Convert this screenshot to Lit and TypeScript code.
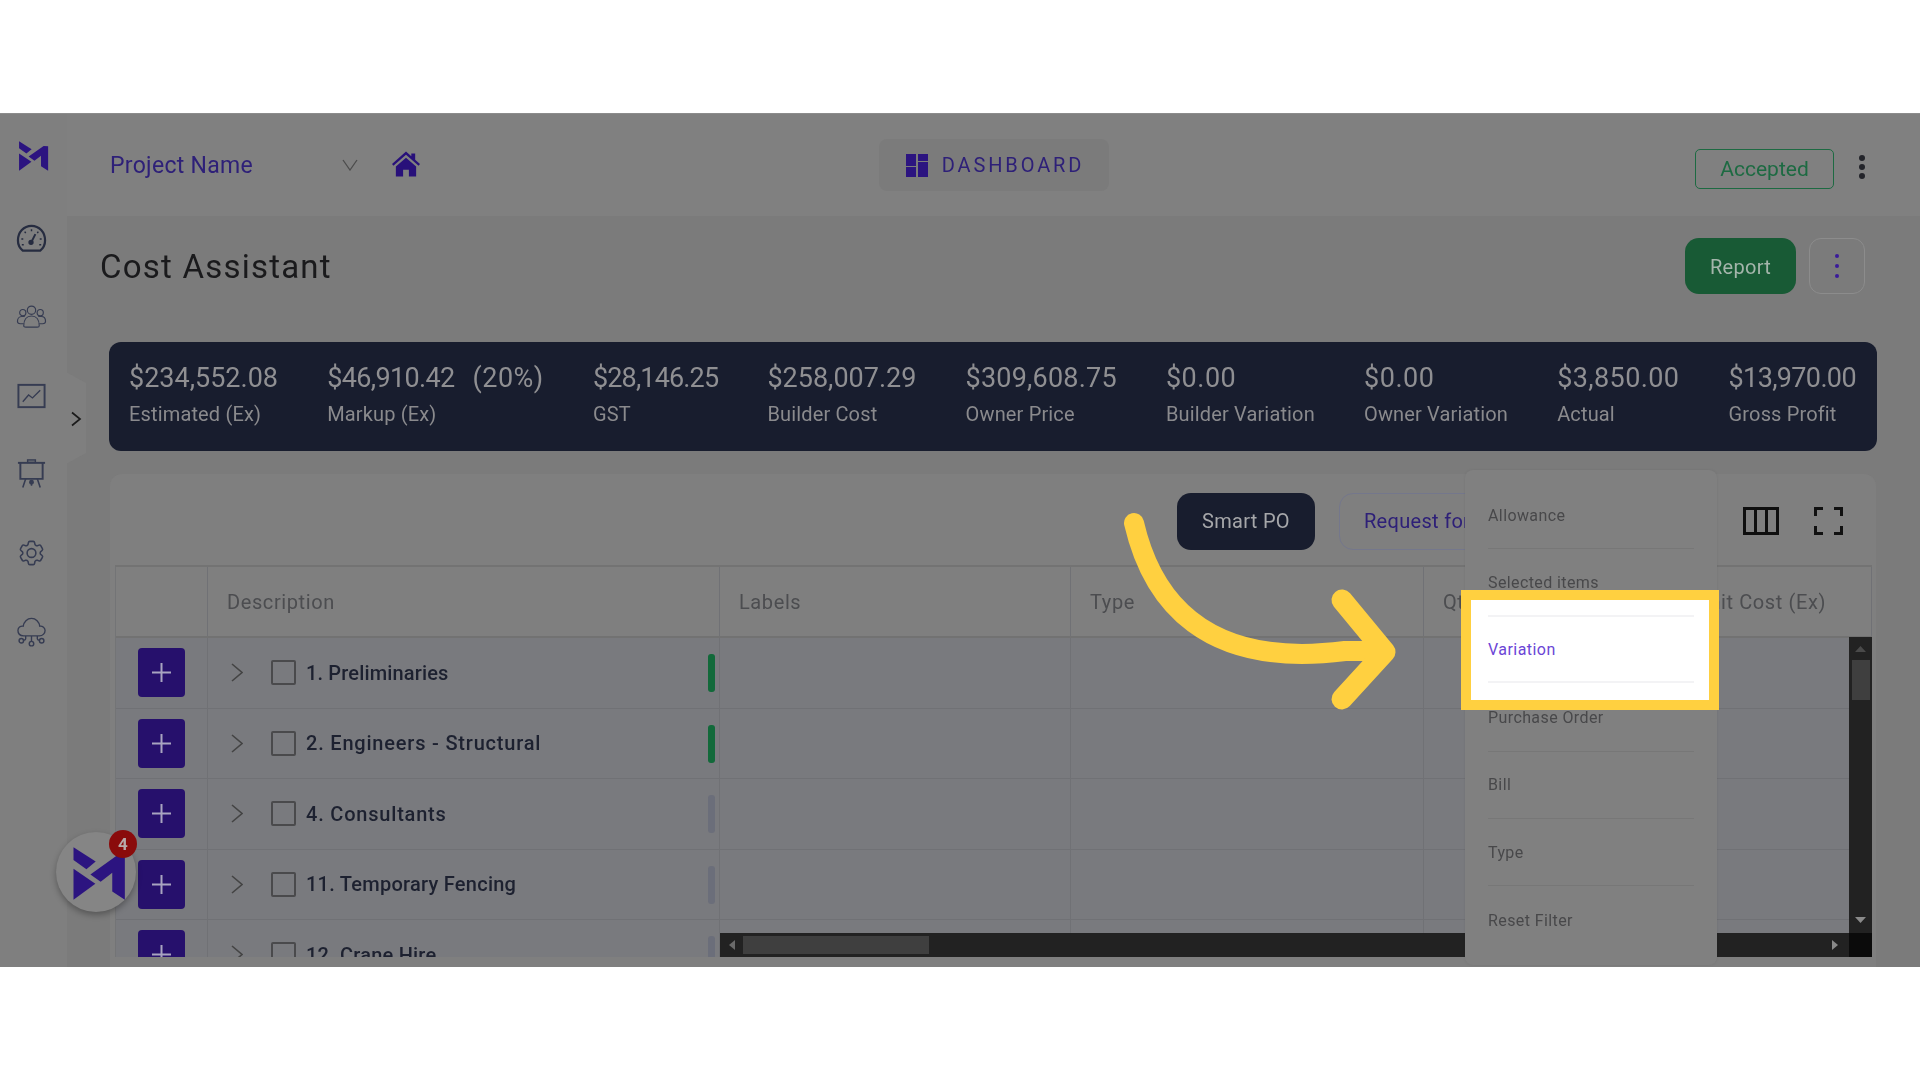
import { LitElement, html, css, svg } from "lit";
import { customElement } from "lit/decorators.js";

const logo = (w: number, h: number) => html`<svg width=${w} height=${h} viewBox="100 102 156 160"><g fill="currentColor"><path d="M101 103L168 146L140 169L101 141Z"/><path d="M101 168L167 213L101 261Z"/><path d="M152 185L232 128L256 130V261L218 236V180L183 207Z"/></g></svg>`;

const gear = "M9.594 3.94c.09-.542.56-.94 1.11-.94h2.593c.55 0 1.02.398 1.11.94l.213 1.281c.063.374.313.686.645.87.074.04.147.083.22.127.325.196.72.257 1.075.124l1.217-.456a1.125 1.125 0 0 1 1.37.49l1.296 2.247a1.125 1.125 0 0 1-.26 1.431l-1.003.827c-.293.241-.438.613-.43.992a7.723 7.723 0 0 1 0 .255c-.008.378.137.75.43.991l1.004.827c.424.35.534.955.26 1.43l-1.298 2.247a1.125 1.125 0 0 1-1.369.491l-1.217-.456c-.355-.133-.75-.072-1.076.124a6.47 6.47 0 0 1-.22.128c-.331.183-.581.495-.644.869l-.213 1.281c-.09.543-.56.94-1.11.94h-2.594c-.55 0-1.019-.398-1.11-.94l-.213-1.281c-.062-.374-.312-.686-.644-.87a6.52 6.52 0 0 1-.22-.127c-.325-.196-.72-.257-1.076-.124l-1.217.456a1.125 1.125 0 0 1-1.369-.49l-1.297-2.247a1.125 1.125 0 0 1 .26-1.431l1.004-.827c.292-.24.437-.613.43-.991a6.932 6.932 0 0 1 0-.255c.007-.38-.138-.751-.43-.992l-1.004-.827a1.125 1.125 0 0 1-.26-1.43l1.297-2.247a1.125 1.125 0 0 1 1.37-.491l1.216.456c.356.133.751.072 1.076-.124.072-.044.146-.086.22-.128.332-.183.582-.495.644-.869l.214-1.28Z";

const navIcons = [
  svg`<path d="M7 29h18c3-2.500 5-6 5-10.500C30 10 24 3.500 16 3.500S2 10 2 18.500C2 23 4 26.500 7 29Z" stroke-width="2.300"/><path d="M16 20l4-8" stroke-width="2"/><circle cx="15.500" cy="20.500" r="2" fill="currentColor"/><path d="M16 7v2M9 9.500l1 1.500M23 9.500l-1 1.500M5.500 17h2M26.500 17h-2M6 23h2M26 23h-2" stroke-width="1.500"/>`,
  svg`<g stroke-width="1.200"><circle cx="16" cy="9" r="4.300"/><circle cx="7" cy="11.500" r="3.200"/><circle cx="25" cy="11.500" r="3.200"/><path d="M8 25c0-6 3-10 8-10s8 4 8 10c0 1-1 1.500-2 1.500H10C9 26.500 8 26 8 25Z"/><path d="M9 15.500H6C3 15.500 1.500 18 1.500 20.500c0 1.500 1 2.500 3 2.500H8M23 15.500h3c3 0 4.500 2.500 4.500 5 0 1.500-1 2.500-3 2.500H24"/></g>`,
  svg`<rect x="2.500" y="4.500" width="27" height="23" stroke-width="2"/><path d="M7 22l6-7 4 3 8-8" stroke-width="1.400"/>`,
  svg`<rect x="12" y="1.500" width="8" height="2.500"/><path d="M2 4.500h28" stroke-width="2"/><path d="M4.500 4.500V21h23V4.500" stroke-width="2"/><path d="M10 21l-3 9M22 21l3 9M16 25v3" stroke-width="1.600"/><circle cx="16" cy="24.500" r="1.800" fill="currentColor"/>`,
  svg`<g transform="scale(1.333)"><path d="${gear}" stroke-width="1.200"/><circle cx="12" cy="12" r="3.400" stroke-width="1.200"/></g>`,
  svg`<path d="M8 20C4 20 2 17.500 2 14.500S4.500 9.500 7.500 10C8 5.500 11.500 2 16 2c4.500 0 8 3.500 8.500 8 3-.500 5.500 2 5.500 4.500S28 20 24 20Z" stroke-width="1.400"/><path d="M16 20v6M10 20v3c0 1-1 1.500-2 1.500M22 20v3c0 1 1 1.500 2 1.500" stroke-width="1.400"/><circle cx="16" cy="28" r="2.300"/><circle cx="5.500" cy="25" r="2.300"/><circle cx="26.500" cy="25" r="2.300"/>`,
];

const stats: { v: string; l: string; x?: string; ls: number }[] = [
  { v: "$234,552.08", l: "Estimated (Ex)", ls: 0 },
  { v: "$46,910.42", l: "Markup (Ex)", x: "(20%)", ls: -0.65 },
  { v: "$28,146.25", l: "GST", ls: -0.85 },
  { v: "$258,007.29", l: "Builder Cost", ls: 0 },
  { v: "$309,608.75", l: "Owner Price", ls: 0.2 },
  { v: "$0.00", l: "Builder Variation", ls: 0.5 },
  { v: "$0.00", l: "Owner Variation", ls: 0.5 },
  { v: "$3,850.00", l: "Actual", ls: 0.4 },
  { v: "$13,970.00", l: "Gross Profit", ls: -0.65 },
];

const rows: { n: string; s: string; ls: number }[] = [
  { n: "1. Preliminaries", s: "ok", ls: 0.15 },
  { n: "2. Engineers - Structural", s: "ok", ls: 0.8 },
  { n: "4. Consultants", s: "idle", ls: 0.8 },
  { n: "11. Temporary Fencing", s: "idle", ls: 0.25 },
  { n: "12. Crane Hire", s: "idle", ls: 0.2 },
];

const menu = ["Allowance", "Selected items", "Variation", "Purchase Order", "Bill", "Type", "Reset Filter"];

@customElement("app-root")
export class AppRoot extends LitElement {
  static styles = css`
    :host { display: block; width: 1920px; height: 1080px; background: #fff; overflow: hidden; font-family: "Roboto", "Liberation Sans", sans-serif; }
    * { box-sizing: border-box; }
    .stage { position: relative; margin-top: 113px; height: 854px; }
    .dim { display: flex; height: 854px; background: #7f7f7f; border-top: 1px solid #8c8c8c; filter: blur(0.45px); position: relative; overflow: hidden; }

    .side { position: relative; width: 67px; flex: none; display: flex; flex-direction: column; align-items: center; padding: 27px 5px 0 0; color: #262c40; }
    .brand { color: #2c1480; height: 30px; margin: 0 0 51px 4px; }
    .nav { display: flex; flex-direction: column; gap: 46.800px; }
    .nav svg { display: block; fill: none; stroke: currentColor; stroke-width: 1.500; }
    .nav svg.soft { color: #363c52; }
    .tab { position: absolute; left: 66px; top: 258px; width: 20px; height: 92px; background: #7f7f7f; clip-path: polygon(0 0, 100% 12%, 100% 88%, 0 100%); display: flex; align-items: center; justify-content: center; color: #1b1b1b; z-index: 2; padding-top: 1px; }

    .main { flex: 1; min-width: 0; display: flex; flex-direction: column; background: #7b7b7b; }
    .head { height: 102px; flex: none; background: #808080; display: grid; grid-template-columns: 1fr auto 1fr; align-items: center; }
    .left { display: flex; align-items: center; padding-left: 43px; }
    .pname { width: 232px; font-size: 23px; color: #2e2078; letter-spacing: 0.300px; }
    .home { margin-left: 34px; margin-top: -2px; color: #28107a; display: block; }
    .pill { width: 230px; height: 52px; border-radius: 8px; background: #7b7b7b; display: flex; align-items: center; justify-content: center; gap: 14px; color: #2e2078; font-size: 20px; letter-spacing: 2.900px; padding-left: 3px; }
    .right { display: flex; justify-content: flex-end; align-items: center; padding-right: 55px; gap: 25px; }
    .accepted { margin-top: 8px; width: 139px; height: 40px; border: 1.500px solid #1d6a42; border-radius: 5px; color: #1d6a42; font-size: 21px; display: flex; align-items: center; justify-content: center; }
    .dots { display: flex; flex-direction: column; gap: 3px; margin-top: 3px; }
    .dots i { width: 6px; height: 6px; border-radius: 50%; background: #23242a; display: block; }

    .titlebar { height: 56px; margin: 22px 55px 0 33px; flex: none; display: flex; align-items: center; }
    h1 { flex: 1; margin: 0; font-weight: 400; font-size: 33px; color: #1a1a1c; letter-spacing: 1.220px; }
    .report { width: 111px; height: 56px; background: #185a35; border-radius: 14px; color: #a4b5ab; font-size: 20px; letter-spacing: 0.300px; display: flex; align-items: center; justify-content: center; padding-top: 1px; }
    .morebtn { margin-left: 13px; width: 56px; height: 56px; border: 1px solid #8c8c8c; border-radius: 12px; display: flex; flex-direction: column; align-items: center; justify-content: center; gap: 6px; }
    .morebtn i { width: 4px; height: 4px; border-radius: 50%; background: #3a1a9a; display: block; }

    .stats { flex: none; margin: 48px 43px 0 42px; height: 109px; background: #181d2e; border-radius: 12px; display: flex; justify-content: space-between; padding: 21px 21px 0 20px; color: #8f8f92; }
    .val { font-size: 27px; line-height: 30px; white-space: pre; }
    .val span { margin-left: 18px; letter-spacing: 0.500px; }
    .lab { font-size: 20px; line-height: 24px; margin-top: 9px; color: #8a8a8d; letter-spacing: 0.150px; }

    .card { flex: none; margin: 23px 44px 0 43px; height: 493px; background: #7f7f7f; border-radius: 12px 12px 0 0; }
    .tools { height: 91px; display: flex; align-items: center; justify-content: flex-end; padding: 3px 33px 0 0; }
    .tools .smart { width: 138px; height: 57px; background: #181d2e; color: #a6a7aa; border-radius: 14px; font-size: 20px; letter-spacing: 0.300px; display: flex; align-items: center; justify-content: center; }
    .tools .req { margin-left: 24px; margin-right: 164px; width: 240px; height: 57px; border: 1px solid #74778c; border-radius: 14px; color: #2e2078; font-size: 20px; letter-spacing: 0.300px; display: flex; align-items: center; padding-left: 24px; }
    .tools .req span { display: block; width: 102px; overflow: hidden; white-space: nowrap; }
    .tools svg { display: block; }
    .tools .fs { margin-left: 35px; }

    .table { position: relative; margin-left: 5px; width: 1757px; height: 392px; overflow: hidden; border-top: 2px solid #737373; border-left: 1px solid #737476; }
    .tr { display: grid; grid-template-columns: 92px 512px 351px 353px 258px 190px; height: 70.500px; border-bottom: 1px solid #707175; background: #797a7e; }
    .tr.th { height: 71px; background: #7f7f7f; border-bottom-width: 2px; border-bottom-color: #727272; }
    .td { border-right: 1px solid #707175; display: flex; align-items: center; min-width: 0; }
    .th .td { color: #4c4d50; font-size: 20px; letter-spacing: 0.600px; padding-left: 19px; white-space: nowrap; }
    .th .td.unit { justify-content: flex-end; padding: 0 45px 0 0; }
    .plus { margin-left: 22px; width: 47px; height: 49px; background: #26106c; border-radius: 4px; color: #a8a4c0; display: flex; align-items: center; justify-content: center; }
    .desc { padding-left: 23px; position: relative; }
    .chev { color: #444; display: block; flex: none; }
    .box { margin-left: 28px; width: 25px; height: 25px; border: 2.500px solid #4a4a4c; border-radius: 2px; flex: none; }
    .name { margin-left: 10px; font-size: 20px; font-weight: 500; color: #1d2130; white-space: nowrap; }
    .bar { position: absolute; right: 4px; top: 16px; width: 7px; height: 38px; border-radius: 3px; }
    .bar.ok { background: #12693a; }
    .bar.idle { background: #6b6e7a; }

    .hs { position: absolute; left: 604px; top: 366px; width: 1129px; height: 24px; background: #222; }
    .hs b { position: absolute; left: 23px; top: 3px; width: 186px; height: 18px; background: #3f3f3f; }
    .vs { position: absolute; left: 1733px; top: 70px; width: 24px; height: 296px; background: #222; }
    .vs b { position: absolute; left: 3px; top: 23px; width: 18px; height: 40px; background: #3f3f3f; }
    .hs svg, .vs svg { position: absolute; fill: #6a6a6a; }
    .corner { position: absolute; left: 1733px; top: 366px; width: 24px; height: 24px; background: #0b0b0b; }

    .drop { position: absolute; left: 1465px; top: 356px; width: 252px; height: 495px; background: #808080; border-radius: 8px; padding: 12px 23px 0; box-shadow: 0 0 3px rgba(0,0,0,0.08); }
    .drop div { height: 67.400px; border-bottom: 1px solid #777; display: flex; align-items: center; font-size: 16px; color: #48484a; letter-spacing: 0.400px; }
    .drop div:last-child { border-bottom: 0; }

    .widget { position: absolute; left: 56px; top: 718px; width: 80px; height: 80px; border-radius: 50%; background: #858585; box-shadow: 0 3px 6px rgba(0,0,0,0.3); color: #2c1480; display: flex; align-items: center; justify-content: center; padding: 3px 0 0 6px; }
    .badge { position: absolute; left: 53px; top: -2px; width: 28px; height: 28px; border-radius: 50%; background: #8a0b0b; color: #b8a9a9; font-size: 17px; font-weight: 700; display: flex; align-items: center; justify-content: center; }

    .spot { position: absolute; left: 1461px; top: 477px; width: 258px; height: 120px; border: 10px solid #ffd040; background: #fff; padding: 15px 15px 0 17px; }
    .spot div { height: 68px; border-top: 2px solid #f3f3f5; border-bottom: 2px solid #f3f3f5; display: flex; align-items: center; color: #6b45d6; font-size: 16px; letter-spacing: 0.450px; padding-top: 1px; }
    .arrow { position: absolute; left: 1100px; top: 360px; }
  `;

  render() {
    return html`<div class="stage">
      <div class="dim">
        <aside class="side">
          <div class="brand">${logo(31, 30)}</div>
          <div class="nav">
            ${navIcons.map((p, i) => html`<svg class=${i === 0 ? "" : "soft"} width="31" height="32" viewBox="0 0 32 32">${p}</svg>`)}
          </div>
          <div class="tab"><svg width="12" height="16" viewBox="0 0 12 16" fill="none" stroke="currentColor" stroke-width="1.700"><path d="M2 1.500L10 8L2 14.500"/></svg></div>
        </aside>
        <div class="main">
          <header class="head">
            <div class="left">
              <div class="pname">Project Name</div>
              <svg width="16" height="12" viewBox="0 0 16 12" fill="none" stroke="#4c4c4c" stroke-width="1.300"><path d="M1 1l7 10 7-10"/></svg>
              <svg class="home" width="28" height="26" viewBox="0 0 29 26" fill="currentColor"><path d="M14.500 0L0 13l1.500 1.800L14.500 3.500l13 11.300L29 13l-5-4.500V2h-4v3Z"/><path d="M4 15.500L14.500 6.500 25 15.500V26h-7.500v-7h-6v7H4Z"/></svg>
            </div>
            <div class="pill">
              <svg width="22" height="23" viewBox="0 0 22 23" fill="#2c1480"><rect width="10" height="12"/><rect y="13" width="10" height="10"/><rect x="12" width="10" height="7"/><rect x="12" y="8" width="10" height="15"/></svg>
              <span>DASHBOARD</span>
            </div>
            <div class="right">
              <div class="accepted">Accepted</div>
              <div class="dots"><i></i><i></i><i></i></div>
            </div>
          </header>
          <div class="titlebar">
            <h1>Cost Assistant</h1>
            <div class="report">Report</div>
            <div class="morebtn"><i></i><i></i><i></i></div>
          </div>
          <section class="stats">
            ${stats.map((s) => html`<div><div class="val" style="letter-spacing:${s.ls}px">${s.v}${s.x ? html`<span>${s.x}</span>` : ""}</div><div class="lab">${s.l}</div></div>`)}
          </section>
          <section class="card">
            <div class="tools">
              <div class="smart">Smart PO</div>
              <div class="req"><span>Request for Quote</span></div>
              <svg width="36" height="28" viewBox="0 0 36 28" fill="none" stroke="#0f0f0f" stroke-width="3"><rect x="1.500" y="1.500" width="33" height="25"/><path d="M12.500 2v24M23.500 2v24"/></svg>
              <svg class="fs" width="29" height="28" viewBox="0 0 29 28" fill="none" stroke="#111" stroke-width="3"><path d="M1.500 9V1.500H9M20 1.500h7.500V9M27.500 19v7.500H20M9 26.500H1.500V19"/></svg>
            </div>
            <div class="table">
              <div class="tr th">
                <div class="td"></div><div class="td">Description</div><div class="td">Labels</div><div class="td">Type</div><div class="td">Qty</div><div class="td unit">Unit Cost (Ex)</div>
              </div>
              ${rows.map((r) => html`<div class="tr">
                <div class="td"><div class="plus"><svg width="19" height="19" viewBox="0 0 19 19" stroke="currentColor" stroke-width="2"><path d="M9.500 0v19M0 9.500h19"/></svg></div></div>
                <div class="td desc">
                  <svg class="chev" width="12" height="19" viewBox="0 0 12 19" fill="none" stroke="currentColor" stroke-width="1.600"><path d="M1 1l10 8.500L1 18"/></svg>
                  <div class="box"></div>
                  <div class="name" style="letter-spacing:${r.ls}px">${r.n}</div>
                  <div class="bar ${r.s}"></div>
                </div>
                <div class="td"></div><div class="td"></div><div class="td"></div><div class="td"></div>
              </div>`)}
              <div class="hs"><b></b>
                <svg style="left:9px;top:7px" width="6" height="10" viewBox="0 0 6 10"><path d="M6 0v10L0 5Z"/></svg>
                <svg style="right:11px;top:7px" width="6" height="10" viewBox="0 0 6 10"><path d="M0 0v10l6-5Z" fill="#8a8a8a"/></svg>
              </div>
              <div class="vs"><b></b>
                <svg style="left:6px;top:9px" width="11" height="6" viewBox="0 0 11 6"><path d="M0 6h11L5.500 0Z" fill="#4a4a4a"/></svg>
                <svg style="left:6px;bottom:10px" width="11" height="6" viewBox="0 0 11 6"><path d="M0 0h11L5.500 6Z" fill="#8a8a8a"/></svg>
              </div>
              <div class="corner"></div>
            </div>
          </section>
        </div>
        <div class="drop">${menu.map((m) => html`<div>${m}</div>`)}</div>
        <div class="widget">${logo(52, 53)}<div class="badge">4</div></div>
      </div>
      <div class="spot"><div>Variation</div></div>
      <svg class="arrow" width="300" height="260" viewBox="0 0 300 260" fill="none" stroke="#ffd040" stroke-width="20" stroke-linecap="round" stroke-linejoin="round">
        <path d="M34 50C52 128 105 196 245 178L284 178"/>
        <path d="M242 127L285 179L242 226" stroke-width="21"/>
      </svg>
    </div>`;
  }
}
